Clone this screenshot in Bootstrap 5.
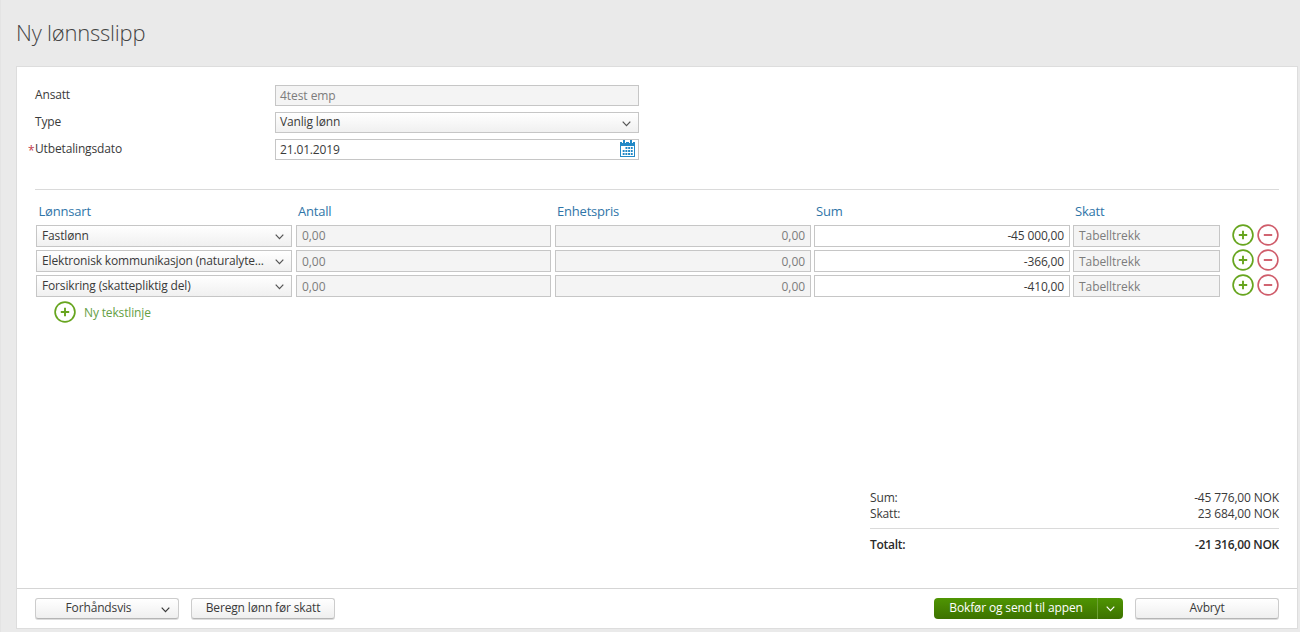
<!DOCTYPE html>
<html lang="no">
<head>
<meta charset="utf-8">
<meta name="viewport" content="width=device-width, initial-scale=1">
<title>Ny lønnsslipp</title>
<link rel="stylesheet" href="https://cdn.jsdelivr.net/npm/bootstrap@5.3.0/dist/css/bootstrap.min.css">
<style>
body{background:#eaeaea;font-family:"Open Sans","Noto Sans",sans-serif;font-size:12px;line-height:16px;letter-spacing:-.15px;color:#3a3a3a;height:632px;overflow:hidden;border-left:1px solid #e4e4e4}
h1{font-family:"Open Sans Light","Open Sans",sans-serif;font-size:22px;line-height:30px;font-weight:300;letter-spacing:-.22px;color:#444;padding:17px 0 0 15px;height:66px;margin:0}
.sheet{margin-left:15px;width:1282px;height:563px;background:#fff;border:1px solid #ddd}
.sheet-main{height:521px;padding:18px 18px 35px}
.form-line{height:27px}
.form-line label{width:240px;line-height:19px;position:relative}
.req{position:absolute;left:-7px;top:2px;color:#c33c4c}
.box{border:1px solid #c6c6c6;background:#fff;height:22px;line-height:20px;padding:0 5px;white-space:nowrap;overflow:hidden;color:#3a3a3a}
.box-off{background:#f4f4f4;color:#7c7c7c;letter-spacing:-.06px}
.box-pick{background:linear-gradient(#fff,#f0f0f0);display:flex;justify-content:space-between}
.form-line .box{width:364px;height:21px;line-height:19px;padding-left:4px}
.form-line .box-pick{line-height:18px}
.box-pick svg{margin:8px 2px 0 0;flex:none;color:#555}
.rule{border-top:1px solid #dadada}
.rule-form{margin-top:23px}
.pay-grid{display:grid;grid-template-columns:260px 259px 259px 259px 159px 25px 22px;padding-left:1px}
.pay-row{height:25px}
.pay-row>.box{margin-right:4px}
.pay-row>.box:nth-child(3),.pay-row>.box:nth-child(4){margin-right:3px}
.pay-row>.box:nth-child(5){margin-right:12px}
.pay-row>svg{margin:-1px 0 0 -.4px}
.pay-row+.pay-row>.box:not(.box-pick){line-height:21px}
.heads{color:#2f75a8;font-size:13px;letter-spacing:-.2px;height:35px;padding-top:12px;line-height:18px}
.heads span{padding-left:2px}
.heads span:first-child{padding-left:2.5px}
.new-line{color:#65a045;padding:1px 0 0 19px}
.new-line span{padding-top:2px}
.totals{width:409px}
.totals .rule{margin-top:6px}
.total-line{padding-top:8px;font-weight:600;letter-spacing:-.27px;color:#2a2a2a}
.btn-x{border:1px solid #ccc;border-bottom-color:#b5b5b5;border-radius:3px;background:linear-gradient(#fff,#efefef);color:#3a3a3a;font-size:12px;letter-spacing:-.15px;line-height:18px;height:21px;width:144px;padding:0 0 1px;box-shadow:0 1px 0 #ddd}
.btn-x svg{margin:8px 8px 0 0}
.btn-go{background:linear-gradient(#4f9503,#3d7200);color:#fff;font-size:12px;letter-spacing:-.13px;line-height:19px;height:21px;padding:0 0 2px;border:0;border-radius:4px}
.go-text{width:164px}
.go-more{width:26px;border-left:1px solid #6da135;padding-top:3px}
.gap-12{gap:12px}
.footer-bar{height:40px;border-top:1px solid #d5d5d5;padding:9px 18px 0}
</style>
</head>
<body>
<svg class="d-none" xmlns="http://www.w3.org/2000/svg">
<symbol id="chev" viewBox="0 0 9 6"><path d="M.7.7 4.5 4.7 8.3.7" fill="none" stroke="currentColor" stroke-width="1.2"/></symbol>
<symbol id="plus" viewBox="0 0 22 22"><circle cx="11" cy="11" r="9.9" fill="#fff" stroke="#67a51f" stroke-width="1.7"/><path d="M11 6.8v8.4M6.8 11h8.4" stroke="#67a51f" stroke-width="1.9"/></symbol>
<symbol id="minus" viewBox="0 0 22 22"><circle cx="11" cy="11" r="9.9" fill="#fff" stroke="#cf5c6a" stroke-width="1.6"/><path d="M6.8 11h8.4" stroke="#cf5c6a" stroke-width="1.9"/></symbol>
</svg>
<h1><span>Ny lønnsslipp</span></h1>
<main class="sheet">
<div class="sheet-main d-flex flex-column">
<div class="form-line d-flex"><label>Ansatt</label><div class="box box-off">4test emp</div></div>
<div class="form-line d-flex"><label>Type</label><div class="box box-pick"><span>Vanlig lønn</span><svg width="9" height="6"><use href="#chev"/></svg></div></div>
<div class="form-line d-flex"><label><span class="req">*</span>Utbetalingsdato</label><div class="box d-flex justify-content-between pe-0"><span>21.01.2019</span>
<svg width="18" height="18" viewBox="0 0 18 18"><path d="M0 2h15v15H0z" fill="#2389c6"/><path d="M1 6h13v10H1z" fill="#fff"/><path d="M2 0h4v3H2zM9 0h4v3H9z" fill="#fff"/><path d="M3 0h2v3.5H3zM10 0h2v3.5h-2z" fill="#2389c6"/><path d="M5.5 8h7.2M2.7 11h10M2.7 14h10" stroke="#2389c6" stroke-width="2" stroke-dasharray="1.9 .8"/></svg></div></div>
<div class="rule rule-form"></div>
<div class="pay-grid heads"><span>Lønnsart</span><span>Antall</span><span>Enhetspris</span><span>Sum</span><span>Skatt</span></div>
<div class="pay-grid pay-row"><div class="box box-pick"><span>Fastlønn</span><svg width="9" height="6"><use href="#chev"/></svg></div><div class="box box-off">0,00</div><div class="box box-off text-end">0,00</div><div class="box text-end">-45 000,00</div><div class="box box-off">Tabelltrekk</div><svg width="22" height="22"><use href="#plus"/></svg><svg width="22" height="22"><use href="#minus"/></svg></div>
<div class="pay-grid pay-row"><div class="box box-pick"><span>Elektronisk kommunikasjon (naturalyte...</span><svg width="9" height="6"><use href="#chev"/></svg></div><div class="box box-off">0,00</div><div class="box box-off text-end">0,00</div><div class="box text-end">-366,00</div><div class="box box-off">Tabelltrekk</div><svg width="22" height="22"><use href="#plus"/></svg><svg width="22" height="22"><use href="#minus"/></svg></div>
<div class="pay-grid pay-row"><div class="box box-pick"><span>Forsikring (skattepliktig del)</span><svg width="9" height="6"><use href="#chev"/></svg></div><div class="box box-off">0,00</div><div class="box box-off text-end">0,00</div><div class="box text-end">-410,00</div><div class="box box-off">Tabelltrekk</div><svg width="22" height="22"><use href="#plus"/></svg><svg width="22" height="22"><use href="#minus"/></svg></div>
<div class="new-line d-flex align-items-center gap-2"><svg width="22" height="22"><use href="#plus"/></svg><span>Ny tekstlinje</span></div>
<div class="totals mt-auto ms-auto">
<div class="d-flex justify-content-between"><span>Sum:</span><span>-45 776,00 NOK</span></div>
<div class="d-flex justify-content-between"><span>Skatt:</span><span>23 684,00 NOK</span></div>
<div class="rule"></div>
<div class="total-line d-flex justify-content-between"><span>Totalt:</span><span>-21 316,00 NOK</span></div>
</div>
</div>
<footer class="footer-bar d-flex gap-12">
<button class="btn btn-x d-flex"><span class="flex-fill">Forhåndsvis</span><svg class="flex-shrink-0" width="9" height="6"><use href="#chev"/></svg></button><button class="btn btn-x">Beregn lønn før skatt</button>
<div class="btn-group ms-auto"><button class="btn btn-go go-text">Bokfør og send til appen</button><button class="btn btn-go go-more d-flex justify-content-center align-items-center"><svg width="9" height="6"><use href="#chev"/></svg></button></div>
<button class="btn btn-x">Avbryt</button>
</footer>
</main>
<script src="https://cdn.jsdelivr.net/npm/bootstrap@5.3.0/dist/js/bootstrap.bundle.min.js"></script>
</body>
</html>
